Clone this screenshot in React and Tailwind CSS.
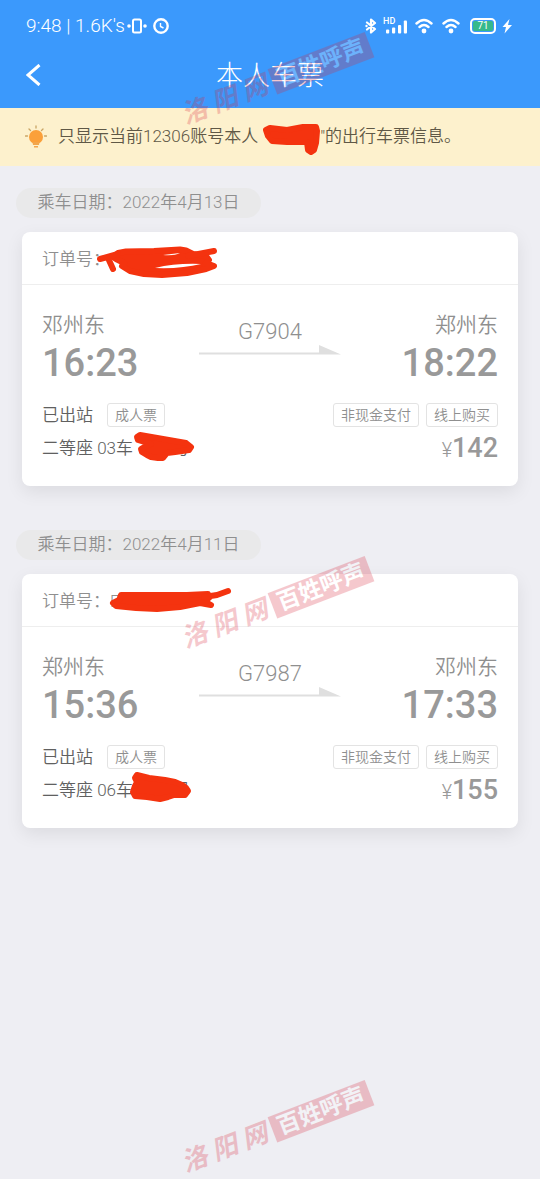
const tickets = [
  {
    id: "g7904",
    date: "2022年4月13日",
    orderPrefix: "",
    from: "邓州东",
    to: "郑州东",
    departure: "16:23",
    arrival: "18:22",
    train: "G7904",
    status: "已出站",
    type: "成人票",
    seat: "二等座 03车",
    price: "142",
    tags: ["非现金支付", "线上购买"],
    orderMark: (
      <>
        <path d="M17 13L22 9L30 7.500L58 7L84 5.500L90 6.500L97 10L110 12L113 16L110 19L118 22L110 25L91 29L66 31L48 30L34 27L26 22L28 19L20 15Z" />
        <path d="M4 15L22 10M92 12L118 7M12 14L17 25" fill="none" />
        <path
          d="M59 24Q80 19 105 20Q85 25 59 24ZM67 11L84 9Q78 12 67 11Z"
          fill="#fff"
          stroke="none"
        />
      </>
    ),
    seatMark: (
      <path d="M8 7L11 5L34 9L57 13L62 17L60 20L46 22L38 23L34 28L29 28L22 27L18 25L13 22L12 19L17 16L22 14L9 10Z" />
    ),
  },
  {
    id: "g7987",
    date: "2022年4月11日",
    orderPrefix: "E",
    from: "郑州东",
    to: "邓州东",
    departure: "15:36",
    arrival: "17:33",
    train: "G7987",
    status: "已出站",
    type: "成人票",
    seat: "二等座 06车",
    price: "155",
    tags: ["非现金支付", "线上购买"],
    orderMark: (
      <>
        <path d="M17 17L23 14L25 9L54 9L91 9L112 8L113 12L108 15L115 19L104 17L84 21L61 23L40 22L20 20Z" />
        <path d="M108 11L121 9L132 5" fill="none" />
      </>
    ),
    seatMark: (
      <path d="M6 6L8 3L20 6L36 8L46 10L53 13L57 16L59 19L56 23L45 23L39 25L31 27L18 25L6 24L4 20L6 14L8 10Z" />
    ),
  },
];

function WifiIcon() {
  return (
    <svg className="h-4 w-[18px]" viewBox="0 0 18 16" fill="none" aria-hidden="true">
      <path
        d="M1.500 5.500Q9-1.500 16.500 5.500M4.500 9Q9 5 13.500 9"
        stroke="#fff"
        strokeWidth="2.400"
        strokeLinecap="round"
      />
      <circle cx="9" cy="13" r="2.400" fill="#fff" />
    </svg>
  );
}

function StatusBar() {
  return (
    <div className="flex h-7 items-center justify-between pr-7 pl-[26px]">
      <div className="flex items-center">
        <span className="text-[19px] font-light">9:48 | 1.6K's</span>
        <svg className="ml-0.5 h-4 w-5" viewBox="0 0 20 16" fill="none" aria-hidden="true">
          <rect x="6" y="1.500" width="8" height="13" rx="1.500" stroke="#fff" strokeWidth="2" />
          <circle cx="2" cy="8" r="1.800" fill="#fff" />
          <circle cx="18" cy="8" r="1.800" fill="#fff" />
        </svg>
        <svg className="ml-1.5 h-4 w-4" viewBox="0 0 16 16" fill="none" aria-hidden="true">
          <circle cx="8" cy="8" r="6.700" stroke="#fff" strokeWidth="2.400" />
          <path d="M7.500 5V8.500L10.500 10" stroke="#fff" strokeWidth="1.400" />
        </svg>
      </div>

      <div className="flex items-center">
        <svg className="h-4 w-3" viewBox="0 0 12 16" fill="none" aria-hidden="true">
          <path
            d="M2 4.500L10 11L6 14.500V1.500L10 5L2 11.500"
            stroke="#fff"
            strokeWidth="2.200"
            strokeLinejoin="round"
            strokeLinecap="round"
          />
          <circle cx="1.500" cy="8" r="1.200" fill="#fff" />
        </svg>
        <div className="relative ml-1.5 h-4 w-6">
          <span className="absolute top-0 left-0 text-[9px] leading-[7px] font-medium">HD</span>
          <svg className="h-4 w-6" viewBox="0 0 24 16" fill="#fff" aria-hidden="true">
            <rect x="3" y="11.500" width="3.200" height="4" rx="1" />
            <rect x="9" y="9.500" width="3.200" height="6" rx="1" />
            <rect x="15" y="7" width="3.200" height="8.500" rx="1" />
            <rect x="20.800" y="2.500" width="3.200" height="13" rx="1" />
          </svg>
        </div>
        <div className="ml-2 flex gap-[9px]">
          <WifiIcon />
          <WifiIcon />
        </div>
        <div className="ml-2.5 flex h-4 w-[26px] rounded-[5px] border-2 border-white p-px">
          <span className="flex flex-1 items-center justify-center rounded-[2px] bg-[#36b98c] text-[10px] leading-none font-normal">
            71
          </span>
        </div>
        <svg className="ml-1.5 h-4 w-[10px]" viewBox="0 0 10 16" fill="#fff" aria-hidden="true">
          <path d="M7.500 1L0.500 9H4L2.500 15.500L10 7H6Z" />
        </svg>
      </div>
    </div>
  );
}

function BulbIcon() {
  return (
    <svg className="h-6 w-[22px] shrink-0" viewBox="0 0 22 24" aria-hidden="true">
      <circle cx="11" cy="12" r="7" fill="#fba03a" />
      <path d="M7.500 17H14.500L14 20H8ZM9 21H13V22.500H9Z" fill="#f3a64c" />
      <path
        d="M11 1V3M4 4L5.500 5.500M18 4L16.500 5.500M0.500 11H2.500M19.500 11H21.500"
        stroke="#c9a565"
        strokeWidth="1.300"
        strokeLinecap="round"
      />
    </svg>
  );
}

function Scribble({ className, viewBox, children }) {
  return (
    <svg
      className={className}
      viewBox={viewBox}
      fill="#f4330f"
      stroke="#f4330f"
      strokeWidth="6"
      strokeLinejoin="round"
      strokeLinecap="round"
      aria-hidden="true"
    >
      {children}
    </svg>
  );
}

function Tag({ children }) {
  return (
    <span className="flex h-6 items-center rounded-[3px] border border-[#e3e3e3] px-[7px] text-[14px] text-[#8f8f8f]">
      {children}
    </span>
  );
}

function Ticket({ ticket }) {
  return (
    <section className="mb-11">
      <h2 className="mx-4 flex h-[30px] w-fit min-w-[245px] items-center justify-center rounded-full bg-[#e9e9ea] px-5 text-[17px] text-[#8f8f8f]">
        乘车日期：{ticket.date}
      </h2>

      <article className="mx-[22px] mt-3.5 rounded-lg bg-white text-[#8f8f8f] shadow-[0_6px_18px_rgba(0,0,0,0.08)]">
        <div className="relative flex h-[53px] items-center border-b border-[#eeeeee] px-5 pt-[3px] text-[17px]">
          订单号：{ticket.orderPrefix}
          <Scribble className="absolute top-3 left-[74px] h-9 w-[136px]" viewBox="0 0 136 36">
            {ticket.orderMark}
          </Scribble>
        </div>

        <div className="px-5 pt-[26px] pb-[22px]">
          <div className="flex justify-between">
            <div>
              <p className="text-[21px] leading-7">{ticket.from}</p>
              <p className="text-[38px] leading-[48px] font-medium text-[#999]">
                {ticket.departure}
              </p>
            </div>
            <div className="flex flex-col items-center pt-2">
              <p className="text-[22px] leading-[26px]">{ticket.train}</p>
              <svg className="h-2.5 w-[142px]" viewBox="0 0 142 10" fill="#dfdfdf" aria-hidden="true">
                <path d="M0 7.500H120V0L142 9.500H0Z" />
              </svg>
            </div>
            <div className="text-right">
              <p className="text-[21px] leading-7">{ticket.to}</p>
              <p className="text-[38px] leading-[48px] font-medium text-[#999]">
                {ticket.arrival}
              </p>
            </div>
          </div>

          <div className="mt-4 flex items-center justify-between">
            <div className="flex items-center gap-3.5">
              <span className="text-[17px] leading-6 text-[#606060]">{ticket.status}</span>
              <Tag>{ticket.type}</Tag>
            </div>
            <div className="flex gap-[7px]">
              {ticket.tags.map((tag) => (
                <Tag key={tag}>{tag}</Tag>
              ))}
            </div>
          </div>

          <div className="mt-[7px] flex h-[30px] items-center justify-between">
            <p className="relative flex text-[17px] text-[#606060]">
              {ticket.seat}
              <span className="w-10" />
              号
              <Scribble
                className="absolute -top-1.5 left-[87px] h-[34px] w-[68px] overflow-visible"
                viewBox="0 0 68 34"
              >
                {ticket.seatMark}
              </Scribble>
            </p>
            <p className="text-[27px] leading-[30px] font-medium text-[#999]">
              <span className="text-[20px] font-light">¥</span>
              {ticket.price}
            </p>
          </div>
        </div>
      </article>
    </section>
  );
}

function Watermark() {
  return (
    <div
      className="flex -rotate-[21deg] items-center gap-1.5 font-bold text-[#d8283c] opacity-25"
      aria-hidden="true"
    >
      <span className="flex gap-1.5 text-[26px] leading-7 italic">
        <span>洛</span>
        <span>阳</span>
        <span>网</span>
      </span>
      <span className="bg-[#d8283c] px-1.5 text-[23px] leading-[27px] text-white">百姓呼声</span>
    </div>
  );
}

export default function App() {
  return (
    <div className="relative flex min-h-screen flex-col overflow-hidden bg-white pb-[21px] font-[Roboto,'Noto_Sans_CJK_SC',sans-serif] font-[350]">
      <header className="bg-[#3b99fc] pt-3 text-white">
        <StatusBar />
        <div className="grid h-[68px] grid-cols-[64px_1fr_64px] items-center">
          <button type="button" aria-label="返回" className="pt-0.5 pl-[26px]">
            <svg className="h-[22px] w-4" viewBox="0 0 16 22" fill="none" aria-hidden="true">
              <path d="M13.500 1L2 11L13.500 21" stroke="#fff" strokeWidth="3" />
            </svg>
          </button>
          <h1 className="pt-1 text-center text-[27px] font-light">本人车票</h1>
        </div>
      </header>

      <div className="flex h-[58px] items-center bg-[#fdf1cd] pl-[25px] text-[17px] text-[#5f5846]">
        <BulbIcon />
        <p className="ml-[11px] flex items-center">
          只显示当前12306账号本人
          <span className="relative h-8 w-[62px]">
            <Scribble className="absolute top-0.5 left-1 h-[34px] w-[60px]" viewBox="0 0 60 34">
              <path d="M4 7L8 5L25 7L41 4L54 4L55 8L54 20L52 27L49 29L46 27L45 19L25 19L10 18L6 13Z" />
            </Scribble>
          </span>
          "的出行车票信息。
        </p>
      </div>

      <main className="flex-1 bg-[#eeeef3] pt-[22px]">
        {tickets.map((ticket) => (
          <Ticket key={ticket.id} ticket={ticket} />
        ))}
      </main>

      <div className="pointer-events-none absolute inset-x-0 top-[66px] flex flex-col items-center gap-[496px] pl-3">
        <Watermark />
        <Watermark />
        <Watermark />
      </div>
    </div>
  );
}
